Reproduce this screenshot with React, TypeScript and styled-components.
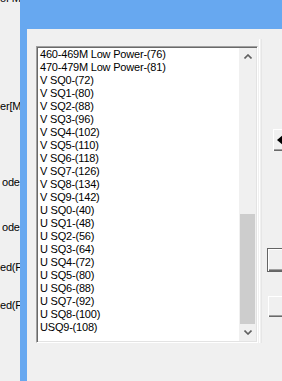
import styled, { createGlobalStyle } from "styled-components";

const GlobalStyle = createGlobalStyle`
  html, body {
    margin: 0;
    padding: 0;
    overflow: hidden;
    background: #f0f0f0;
  }
  * {
    box-sizing: border-box;
  }
`;

const Screen = styled.div`
  display: flex;
  width: 282px;
  height: 381px;
  overflow: hidden;
  background: #f0f0f0;
  font-family: "Liberation Sans", Arial, sans-serif;
  font-size: 11px;
  letter-spacing: -0.2px;
  color: #000;
`;

// parent window peeking out on the left
const BehindStrip = styled.div`
  width: 20px;
  flex: none;
  overflow: hidden;
  display: flex;
  flex-direction: column;
`;

const BehindLabel = styled.div<{ $gap: number; $indent: number }>`
  margin-top: ${(p) => p.$gap}px;
  padding-left: ${(p) => p.$indent}px;
  height: 13px;
  line-height: 13px;
  white-space: nowrap;
`;

const Window = styled.div`
  flex: 1;
  display: flex;
  padding: 29px 0 0 7px;
  background: #67a8f0;
  min-width: 0;
`;

const Client = styled.div`
  flex: 1;
  display: flex;
  align-items: flex-start;
  padding: 17px 0 0 9px;
  background: #f0f0f0;
  min-width: 0;
`;

const ListBox = styled.div`
  width: 222px;
  height: 297px;
  flex: none;
  display: flex;
  background: #fff;
  border-top: 1px solid #a0a0a0;
  border-left: 1px solid #a0a0a0;
  border-right: 1px solid #fff;
  border-bottom: 1px solid #fff;
  box-shadow: inset 1px 1px 0 #696969, inset -1px -1px 0 #e3e3e3;
  padding: 1px;
`;

const Items = styled.div`
  flex: 1;
  padding-left: 2px;
  overflow: hidden;
`;

const Item = styled.div`
  height: 13px;
  line-height: 13px;
  white-space: nowrap;
`;

const ScrollBar = styled.div`
  width: 17px;
  flex: none;
  display: flex;
  flex-direction: column;
  background: #f0f0f0;
`;

const ArrowButton = styled.div`
  height: 17px;
  display: flex;
  align-items: center;
  justify-content: center;
  color: #606060;
`;

const Track = styled.div`
  flex: 1;
  display: flex;
  flex-direction: column;
`;

const Thumb = styled.div<{ $top: number; $size: number }>`
  margin: ${(p) => p.$top}px 1px 0 1px;
  height: ${(p) => p.$size}px;
  background: #cdcdcd;
`;

const Divider = styled.div`
  width: 3px;
  height: 304px;
  margin: -7px 0 0 1px;
  flex: none;
  border-left: 1px solid #fff;
  border-right: 1px solid #e6e6e6;
`;

const ButtonColumn = styled.div`
  display: flex;
  flex-direction: column;
  align-items: flex-start;
  margin-left: 5px;
  flex: none;
`;

const PushButton = styled.div<{ $gap: number; $shift?: number; $isDefault?: boolean; $h: number }>`
  margin-top: ${(p) => p.$gap}px;
  margin-left: ${(p) => p.$shift ?? 0}px;
  width: 75px;
  height: ${(p) => p.$h}px;
  display: flex;
  align-items: center;
  padding-left: 4px;
  background: #f0f0f0;
  border: 1px solid ${(p) => (p.$isDefault ? "#646464" : "transparent")};
  box-shadow: inset 1px 1px 0 #fff, inset -1px -1px 0 #696969, inset -2px -2px 0 #a0a0a0;
`;

const items = [
  "460-469M Low Power-(76)",
  "470-479M Low Power-(81)",
  ...[72, 80, 88, 96, 102, 110, 118, 126, 134, 142].map((v, i) => `V SQ${i}-(${v})`),
  ...[40, 48, 56, 64, 72, 80, 88, 92, 100].map((v, i) => `U SQ${i}-(${v})`),
  "USQ9-(108)",
];

const behind = [
  { text: "of Mi", gap: -8, indent: 0 },
  { text: "er[Mi", gap: 95, indent: 0 },
  { text: "ode", gap: 63, indent: 2 },
  { text: "ode", gap: 32, indent: 2 },
  { text: "ed(F", gap: 27, indent: 0 },
  { text: "ed(F", gap: 25, indent: 0 },
];

const Chevron = ({ up }: { up?: boolean }) => (
  <svg width="8" height="5" viewBox="0 0 8 5">
    <polyline
      points={up ? "0.5,4.5 4,1 7.5,4.5" : "0.5,0.5 4,4 7.5,0.5"}
      fill="none"
      stroke="currentColor"
      strokeWidth="1.6"
    />
  </svg>
);

export default function App() {
  return (
    <>
      <GlobalStyle />
      <Screen>
        <BehindStrip>
          {behind.map((b, i) => (
            <BehindLabel key={i} $gap={b.gap} $indent={b.indent}>
              {b.text}
            </BehindLabel>
          ))}
        </BehindStrip>
        <Window>
          <Client>
            <ListBox>
              <Items>
                {items.map((t) => (
                  <Item key={t}>{t}</Item>
                ))}
              </Items>
              <ScrollBar>
                <ArrowButton>
                  <Chevron up />
                </ArrowButton>
                <Track>
                  <Thumb $top={149} $size={110} />
                </Track>
                <ArrowButton>
                  <Chevron />
                </ArrowButton>
              </ScrollBar>
            </ListBox>
            <Divider />
            <ButtonColumn>
              <PushButton $gap={82} $shift={5} $h={24}>
                <svg width="6" height="10" viewBox="0 0 6 10">
                  <polygon points="6,0 0,5 6,10" fill="#000" />
                </svg>
              </PushButton>
              <PushButton $gap={96} $h={24} $isDefault />
              <PushButton $gap={23} $h={23} />
            </ButtonColumn>
          </Client>
        </Window>
      </Screen>
    </>
  );
}
